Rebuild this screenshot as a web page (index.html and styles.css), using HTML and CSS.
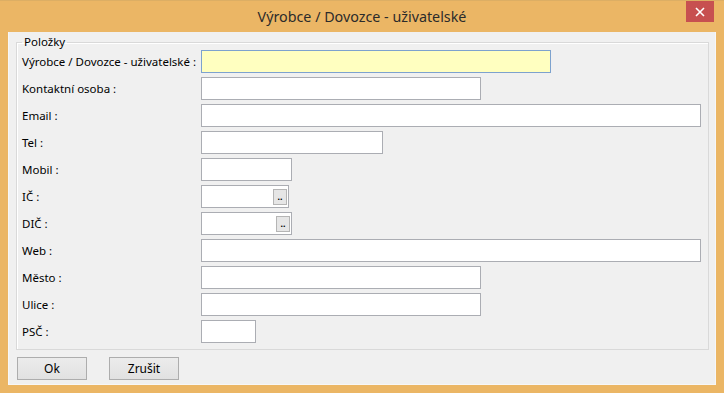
FILE: index.html
```html
<!DOCTYPE html>
<html lang="cs">

<head>
    <meta charset="UTF-8">
    <meta name="viewport" content="width=device-width, initial-scale=1.0">
    <title>Výrobce / Dovozce - uživatelské</title>
    <link rel="stylesheet" href="styles.css">
</head>

<body>
    <div class="window">
        <div class="titlebar">
            <span></span>
            <span class="title">Výrobce / Dovozce - uživatelské</span>
            <button class="close" type="button">
                <svg width="10" height="10" viewBox="0 0 10 10">
                    <path d="M1 1 L9 9 M9 1 L1 9" stroke="#fff" stroke-width="1.6" />
                </svg>
            </button>
        </div>

        <div class="content">
            <fieldset class="group">
                <legend>Položky</legend>
                <div class="form-grid">
                    <label>Výrobce / Dovozce - uživatelské :</label>
                    <input class="field w350 required" type="text">

                    <label>Kontaktní osoba :</label>
                    <input class="field w280" type="text">

                    <label>Email :</label>
                    <input class="field wfull" type="text">

                    <label>Tel :</label>
                    <input class="field w182" type="text">

                    <label>Mobil :</label>
                    <input class="field w91" type="text">

                    <label>IČ :</label>
                    <div class="lookup w88">
                        <input type="text">
                        <button type="button" class="dots">..</button>
                    </div>

                    <label>DIČ :</label>
                    <div class="lookup w91">
                        <input type="text">
                        <button type="button" class="dots">..</button>
                    </div>

                    <label>Web :</label>
                    <input class="field wfull" type="text">

                    <label>Město :</label>
                    <input class="field w280" type="text">

                    <label>Ulice :</label>
                    <input class="field w280" type="text">

                    <label>PSČ :</label>
                    <input class="field w55" type="text">
                </div>
            </fieldset>

            <div class="actions">
                <button type="button" class="button">Ok</button>
                <button type="button" class="button">Zrušit</button>
            </div>
        </div>
    </div>
</body>

</html>
```

FILE: styles.css
```css
body {
    margin: 0;
    font-family: "Noto Sans", "Open Sans", sans-serif;
    font-size: 11.5px;
    color: #000;
    background: #ebb665;
}

.window {
    width: 724px;
    height: 393px;
    box-sizing: border-box;
    padding: 0 8px 8px;
    background: #ebb665;
    border-top: 1px solid #dcae64;
    display: flex;
    flex-direction: column;
}

.titlebar {
    height: 31px;
    display: grid;
    grid-template-columns: 1fr auto 1fr;
    align-items: start;
}

.title {
    font-size: 14.3px;
    color: #2b2b2b;
    padding-top: 6px;
}

.close {
    justify-self: end;
    margin-right: 2px;
    width: 28px;
    height: 21px;
    border: none;
    padding: 0;
    background: #c75050;
    display: flex;
    align-items: center;
    justify-content: center;
}

.content {
    flex: 1;
    background: #f0f0f0;
    border: 1px solid #f7f7f7;
    border-top: none;
}

.group {
    margin: 2px 6px 0 7px;
    padding: 0 7px 6px 5px;
    border: 1px solid #d9d9d9;
    box-shadow: inset 1px 1px 0 #fff;
    min-width: 0;
}

.group legend {
    padding: 0 2px;
    line-height: 16px;
    font-size: 11.5px;
}

.form-grid {
    display: grid;
    grid-template-columns: 179px 1fr;
    grid-auto-rows: 23px;
    row-gap: 4px;
    align-items: center;
}

.form-grid label {
    white-space: nowrap;
    padding-bottom: 1px;
}

.field,
.lookup {
    height: 23px;
    box-sizing: border-box;
    border: 1px solid #abadb3;
    background: #fff;
    margin: 0;
    padding: 0 3px;
    font: inherit;
}

.required {
    background: #ffffc0;
    border-color: #7da2ce;
}

.w350 { width: 350px; }
.w280 { width: 280px; }
.w182 { width: 182px; }
.w91 { width: 91px; }
.w88 { width: 88px; }
.w55 { width: 55px; }
.wfull { width: 100%; }

.lookup {
    display: flex;
    align-items: center;
    padding: 0 1px 0 3px;
}

.lookup input {
    flex: 1;
    min-width: 0;
    border: none;
    outline: none;
    padding: 0;
    background: transparent;
    font: inherit;
}

.dots {
    width: 14px;
    height: 16px;
    padding: 0;
    border: 1px solid #b5b5b5;
    background: #e6e6e6;
    font-size: 9px;
    font-weight: bold;
    line-height: 12px;
    color: #000;
}

.actions {
    display: flex;
    gap: 22px;
    padding: 7px 0 0 8px;
}

.button {
    width: 70px;
    height: 23px;
    padding: 0;
    border: 1px solid #adadad;
    background: linear-gradient(#ececec, #e1e1e1);
    font: inherit;
    font-size: 12px;
    color: #000;
}
```
